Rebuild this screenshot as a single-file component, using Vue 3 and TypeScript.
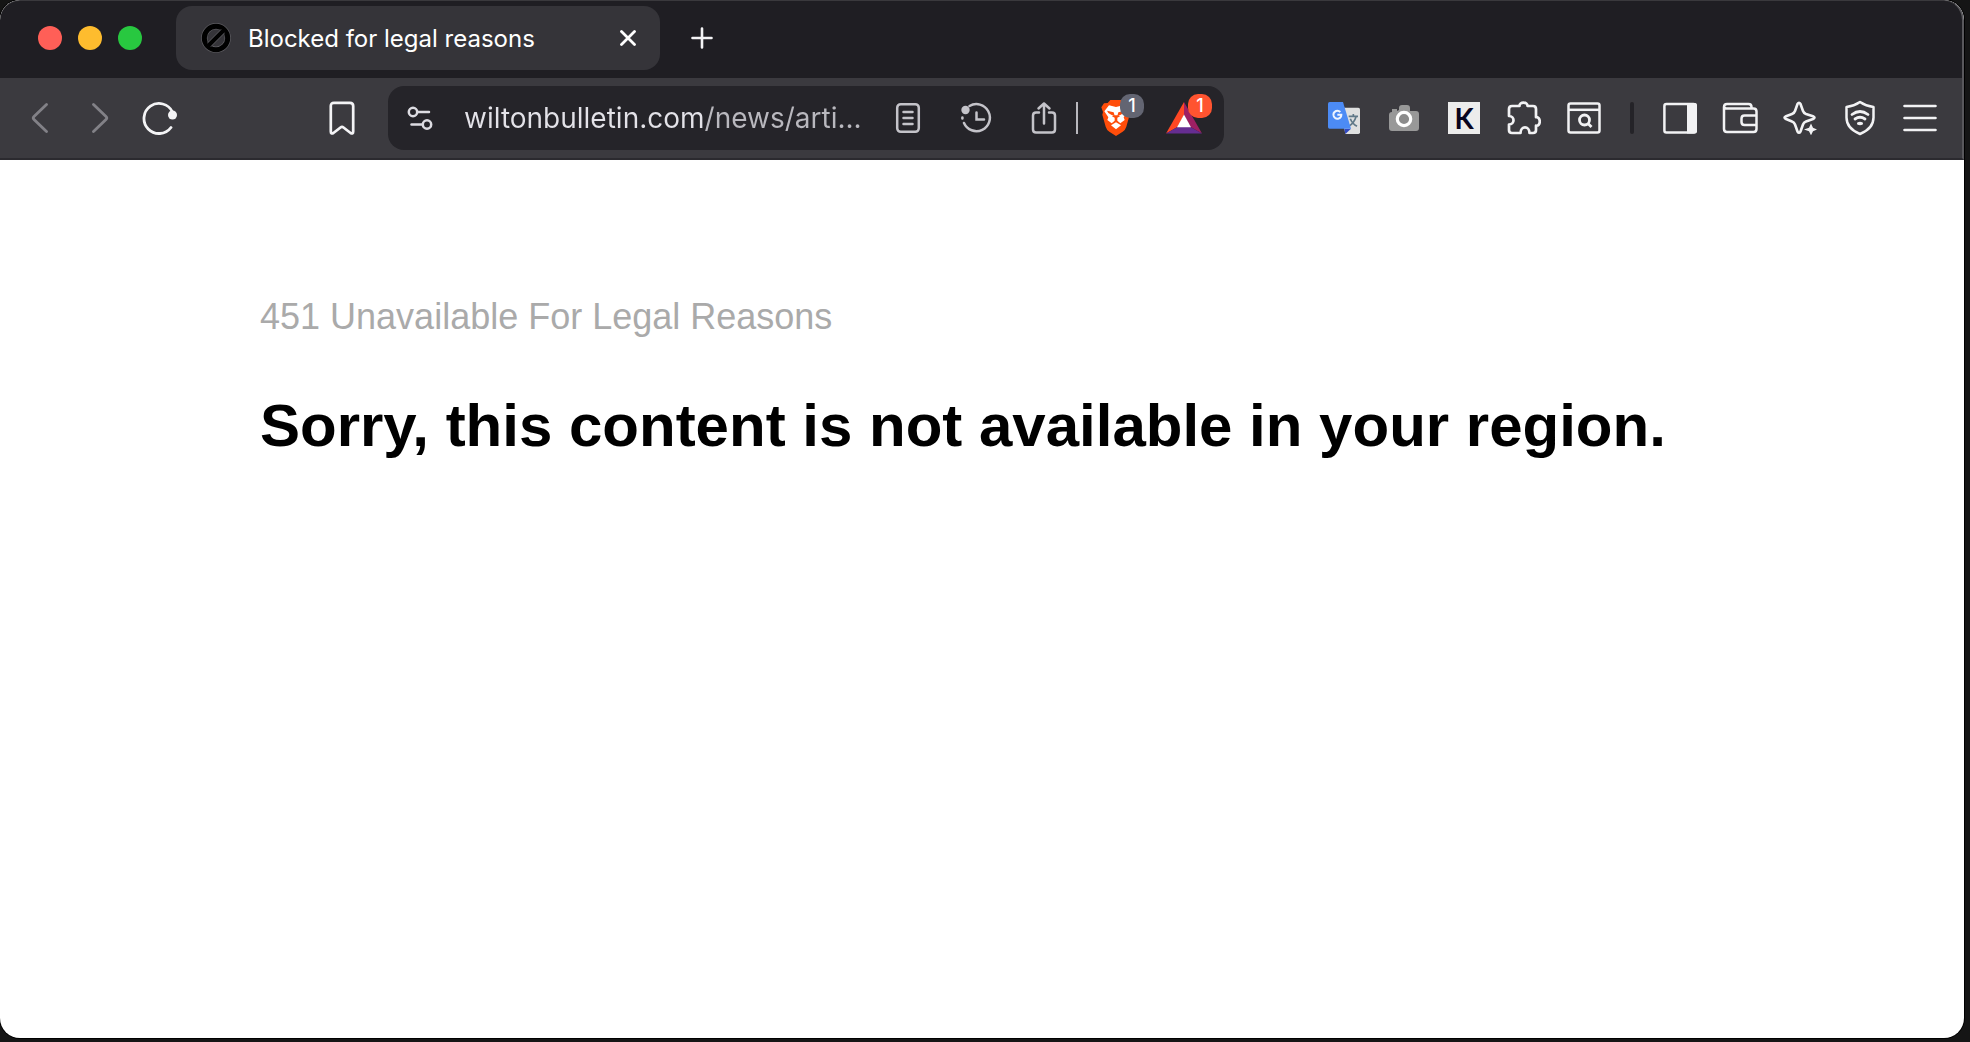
<script setup lang="ts">
import { ref } from 'vue'

const address = ref('wiltonbulletin.com/news/arti...')
const tabTitle = 'Blocked for legal reasons'
const shieldCount = 1
const rewardCount = 1
</script>

<template>
  <div class="desktop">
    <div class="window">
      <header class="tab-strip">
        <div class="lights">
          <button class="light close" aria-label="Close window"></button>
          <button class="light minimise" aria-label="Minimise window"></button>
          <button class="light expand" aria-label="Zoom window"></button>
        </div>
        <div class="tab">
          <svg class="favicon" width="32" height="30" viewBox="0 0 32 30" aria-hidden="true">
            <circle cx="16" cy="15" r="11.7" fill="none" stroke="#5c5b60" stroke-width="6.4" />
            <circle cx="16" cy="15" r="11.7" fill="none" stroke="#000" stroke-width="5" />
            <path d="M9 22 23 8" stroke="#5c5b60" stroke-width="5.4" />
            <path d="M8 23 24 7" stroke="#000" stroke-width="4" />
          </svg>
          <span class="tab-title">{{ tabTitle }}</span>
          <button class="tab-close" aria-label="Close tab">
            <svg width="16" height="16" viewBox="0 0 16 16"><path d="M1.500 1.500l13 13M14.500 1.500l-13 13" fill="none" stroke="#fff" stroke-width="2.800" stroke-linecap="round" /></svg>
          </button>
        </div>
        <button class="new-tab" aria-label="New tab">
          <svg width="22" height="22" viewBox="0 0 22 22"><path d="M11 1.500v19M1.500 11h19" fill="none" stroke="#f4f4f6" stroke-width="2.600" stroke-linecap="round" /></svg>
        </button>
      </header>

      <nav class="toolbar" aria-label="Browser toolbar">
        <div class="history">
          <button class="nav-button" aria-label="Back">
            <svg width="18" height="32" viewBox="0 0 18 32"><path d="M15.500 2.500 3 14.500q-1.500 1.500 0 3l12.500 12" fill="none" stroke="#828187" stroke-width="2.800" stroke-linecap="round" /></svg>
          </button>
          <button class="nav-button" aria-label="Forward">
            <svg width="18" height="32" viewBox="0 0 18 32"><path d="M2.500 2.500 15 14.500q1.500 1.500 0 3l-12.500 12" fill="none" stroke="#828187" stroke-width="2.800" stroke-linecap="round" /></svg>
          </button>
          <button class="nav-button" aria-label="Reload">
            <svg width="36" height="34" viewBox="0 0 36 34">
              <path d="M29 26.500A15 15 0 1 1 30.500 11" fill="none" stroke="#f4f4f6" stroke-width="2.800" stroke-linecap="round" />
              <circle cx="30.500" cy="14" r="4.500" fill="#f4f4f6" />
            </svg>
          </button>
        </div>
        <button class="nav-button" aria-label="Bookmark this tab">
          <svg width="26" height="34" viewBox="0 0 26 34"><path d="M5 1.800h16q3.200 0 3.200 3.200v25.500q0 3-2.600 1.500L14.500 26.500q-1.500-1.200-3 0L4.400 32q-2.600 1.500-2.600-1.500V5Q1.800 1.800 5 1.800z" fill="none" stroke="#f4f4f6" stroke-width="2.700" stroke-linejoin="round" /></svg>
        </button>

        <div class="address-bar">
          <button class="site-info" aria-label="Site settings">
            <svg width="26" height="24" viewBox="0 0 26 24" fill="none" stroke="#dddce2" stroke-width="2.500" stroke-linecap="round">
              <circle cx="6" cy="6" r="4.200" /><path d="M11 6h11" />
              <circle cx="20" cy="18.500" r="4.200" /><path d="M4.500 18.500H15" />
            </svg>
          </button>
          <input v-model="address" class="address" type="text" aria-label="Address" spellcheck="false" />
          <button class="page-action" aria-label="Reader mode">
            <svg width="26" height="32" viewBox="0 0 26 32" fill="none" stroke="#c4c3c9" stroke-width="2.500" stroke-linecap="round">
              <rect x="2.200" y="2.200" width="21.600" height="27.600" rx="3.500" />
              <path d="M8.500 10h9M8.500 16h9M8.500 22h9" />
            </svg>
          </button>
          <button class="page-action" aria-label="History">
            <svg width="34" height="32" viewBox="0 0 34 32" fill="none" stroke="#c4c3c9" stroke-width="2.500" stroke-linecap="round">
              <path d="M10.500 4A13.500 13.500 0 1 1 5 21" />
              <path d="M3.400 15.500v1" />
              <path d="M17.500 10.500v7H25" />
              <circle cx="6.500" cy="8" r="4.200" fill="#c4c3c9" stroke="none" />
            </svg>
          </button>
          <button class="page-action" aria-label="Share">
            <svg width="26" height="34" viewBox="0 0 26 34" fill="none" stroke="#c4c3c9" stroke-width="2.500" stroke-linecap="round" stroke-linejoin="round">
              <path d="M8 11.500H5q-3 0-3 3v14q0 3 3 3h16q3 0 3-3v-14q0-3-3-3h-3" />
              <path d="M13 22.500V2.500M7.500 7.500 13 2.500l5.500 5" />
            </svg>
          </button>
          <span class="bar-divider"></span>
          <button class="badged" aria-label="Shields">
            <svg width="30" height="36" viewBox="0 0 90 108" aria-hidden="true">
              <path d="M28 0h34l8 9 10 1 8 14-4 12 2 8-10 36q-3 10-11 15L45 108 25 95q-8-5-11-15L4 44l2-8L1 22l8-12 11-1z" fill="#ff4d0a" />
              <path d="M24 16 45 21 66 16 80 34 68 52 71 60 58 70 49 62V53L57 49 53 46H37L33 49 41 53V62L32 70 19 60 22 52 10 34z" fill="#fff" />
              <path d="M18 32 38 37 41 47 32 45 22 39zM72 32 52 37 49 47 58 45 68 39z" fill="#ff4d0a" />
              <path d="M30 76 45 67 60 76 45 88z" fill="#fff" />
            </svg>
            <span class="badge grey">{{ shieldCount }}</span>
          </button>
          <button class="badged" aria-label="Rewards">
            <svg width="36" height="32" viewBox="0 0 36 32" aria-hidden="true">
              <path d="M18 0 0 31.500 11.500 25 18 13z" fill="#ff4724" />
              <path d="M18 0 36 31.500 24.500 25 18 13z" fill="#9e1f63" />
              <path d="M0 31.500h36L24.500 25h-13z" fill="#662d91" />
              <path d="M18 12.500 11 25.300h14z" fill="#fff" />
            </svg>
            <span class="badge orange">{{ rewardCount }}</span>
          </button>
        </div>

        <div class="extensions">
          <button class="tool" aria-label="Translate">
            <svg width="32" height="32" viewBox="0 0 96 96" aria-hidden="true">
              <path d="M36 17h55q5 0 5 5v69q0 5-5 5H52z" fill="#dfe0e0" />
              <path d="M62 43h28M76 36v7M84 44q-5 18-22 29M67 50q5 14 20 23" fill="none" stroke="#607988" stroke-width="5" />
              <path d="M49 80h20L52 96z" fill="#3048c0" />
              <path d="M5 0h40l24 80H5q-5 0-5-5V5q0-5 5-5z" fill="#4c8bf5" />
              <path d="M37 30q-6-6-13-3-10 5-7 15 4 10 14 8 9-3 9-12H28" fill="none" stroke="#eef4ff" stroke-width="6" />
            </svg>
          </button>
          <button class="tool" aria-label="Camera">
            <svg width="32" height="28" viewBox="0 0 32 28" aria-hidden="true">
              <path d="M1 11q0-3 3-3V5h5v2l2-1V4q0-3 3-3h5q3 0 3 3v3h6q3 0 3 3v14q0 3-3 3H4q-3 0-3-3z" fill="#989898" />
              <circle cx="16" cy="15" r="6.700" fill="#8c8c8c" stroke="#fff" stroke-width="3.200" />
            </svg>
          </button>
          <button class="tool" aria-label="K extension"><span class="k-tile">K</span></button>
          <button class="tool" aria-label="Extensions">
            <svg width="34" height="34" viewBox="0 0 34 34"><path d="M5 5h7.500C12 .5 21 .5 20.500 5H26q3 0 3 3v8.200c5-.7 5 9.200 0 8.500V29q0 3-3 3h-3.500c0-7.500-9-7.500-9 0H5q-3 0-3-3v-5.500c6 0 6-8.500 0-8.500V8q0-3 3-3z" fill="none" stroke="#f2f2f4" stroke-width="2.700" stroke-linejoin="round" /></svg>
          </button>
          <button class="tool" aria-label="Search tabs">
            <svg width="34" height="32" viewBox="0 0 34 32" fill="none" stroke="#f2f2f4" stroke-width="2.500">
              <rect x="1.500" y="1.500" width="31" height="29" rx="2" /><path d="M2 7.800h30" />
              <circle cx="17.500" cy="18" r="5" stroke-width="2.800" /><path d="M21 21.500 24.500 25" stroke-width="2.800" />
            </svg>
          </button>
          <span class="tool-divider"></span>
          <button class="tool" aria-label="Sidebar">
            <svg width="34" height="32" viewBox="0 0 34 32"><rect x="1.400" y="2" width="31" height="28.500" rx="2" fill="none" stroke="#f2f2f4" stroke-width="2.500" /><path d="M24 1h8q2 0 2 2v26.500q0 2-2 2h-8z" fill="#f2f2f4" /></svg>
          </button>
          <button class="tool" aria-label="Wallet">
            <svg width="36" height="32" viewBox="0 0 36 32" fill="none" stroke="#f2f2f4" stroke-width="2.500" stroke-linejoin="round">
              <path d="M29.500 6.500V5q0-3-3-3H5Q2 2 2 5v22q0 3 3 3h26.500q3 0 3-3V9.500q0-3-3-3H4.500Q2 6.500 2 4.500" />
              <path d="M34 13.500H22.500q-3 0-3 3v3.500q0 3 3 3H34" />
            </svg>
          </button>
          <button class="tool" aria-label="Assistant">
            <svg width="34" height="34" viewBox="0 0 34 34">
              <path d="M14.500 3q1.500-2.500 3 0L20 10q.8 2.200 3 3l7 2.200q3 1.300 0 2.800L23 20.500q-2.200.8-3 3l-2.500 7q-1.500 2.500-3 0L12 23.500q-.8-2.200-3-3L3 18q-3-1.500 0-2.800L9 13q2.200-.8 3-3z" fill="none" stroke="#f2f2f4" stroke-width="2.600" stroke-linejoin="round" />
              <path d="M28 22.500l2 4.200 4 1.800-4 1.800-2 4-2-4-5-1.800 5-1.800z" fill="#f2f2f4" />
            </svg>
          </button>
          <button class="tool" aria-label="VPN">
            <svg width="32" height="36" viewBox="0 0 32 36" fill="none" stroke="#f2f2f4" stroke-width="2.500" stroke-linecap="round" stroke-linejoin="round">
              <path d="M16 2q6 4 13.500 5v10.500q0 11-13.500 16.500Q2.500 28.500 2.500 17.500V7Q10 6 16 2z" />
              <path d="M8 14.500q8-6 16 0M11 19q5-3.500 10 0" stroke-width="2.800" />
              <ellipse cx="16" cy="23.500" rx="3" ry="1.700" fill="#f2f2f4" stroke="none" />
            </svg>
          </button>
          <button class="tool" aria-label="Menu">
            <svg width="34" height="32" viewBox="0 0 34 32"><path d="M1.500 4h31M1.500 16h31M1.500 28h31" stroke="#f2f2f4" stroke-width="2.600" stroke-linecap="round" /></svg>
          </button>
        </div>
      </nav>

      <main class="page">
        <p class="status">451 Unavailable For Legal Reasons</p>
        <h1>Sorry, this content is not available in your region.</h1>
      </main>
    </div>
  </div>
</template>

<style>
body {
  margin: 0;
  background: #151515;
}
</style>

<style scoped>
* {
  box-sizing: border-box;
}

.desktop {
  min-height: 100vh;
  padding: 0 6px 4px 0;
  background: #151515;
  font-family: Inter, "Liberation Sans", sans-serif;
}

.window {
  display: flex;
  flex-direction: column;
  min-height: calc(100vh - 4px);
  overflow: hidden;
  border-radius: 20px;
  background: #fff;
  box-shadow: 0 0 0 1px #000;
}

button {
  display: flex;
  flex: none;
  align-items: center;
  justify-content: center;
  margin: 0;
  padding: 0;
  border: 0;
  background: none;
  font-family: inherit;
}

svg {
  display: block;
  flex: none;
}

.tab-strip {
  display: flex;
  align-items: center;
  height: 78px;
  padding: 0 38px 3px;
  border-top: 1px solid #3a393d;
  border-right: 2px solid #59585c;
  border-radius: 20px 20px 0 0;
  background: #1f1e23;
}

.lights {
  display: flex;
  gap: 16px;
  width: 138px;
}

.light {
  width: 24px;
  height: 24px;
  border-radius: 50%;
}

.close {
  background: #ff5f57;
}

.minimise {
  background: #febc2e;
}

.expand {
  background: #28c840;
}

.tab {
  display: flex;
  align-items: center;
  width: 484px;
  height: 64px;
  padding: 0 24px;
  border-radius: 16px;
  background: #353439;
}

.tab-title {
  flex: 1;
  margin-left: 16px;
  color: #fff;
  font-size: 24px;
  white-space: nowrap;
}

.new-tab {
  width: 64px;
  height: 64px;
  margin-left: 10px;
}

.toolbar {
  display: flex;
  align-items: center;
  height: 82px;
  padding: 0 12px 0 10px;
  border-right: 2px solid #59585c;
  border-bottom: 2px solid #2b2a2f;
  background: #3b3a3f;
}

.history {
  display: flex;
  width: 302px;
}

.nav-button {
  width: 60px;
  height: 60px;
}

.address-bar {
  display: flex;
  flex: 0 1 836px;
  align-items: center;
  min-width: 0;
  height: 64px;
  margin-left: 16px;
  padding: 0 6px 0 18px;
  border-radius: 16px;
  background: #252429;
}

.site-info {
  width: 28px;
}

.address {
  flex: 1;
  min-width: 0;
  height: 48px;
  margin-left: 30px;
  padding: 0;
  border: 0;
  outline: 0;
  background: linear-gradient(90deg, #e3e2e8 240px, #b9b8be 240px);
  background-clip: text;
  -webkit-text-fill-color: transparent;
  font-family: inherit;
  font-size: 28px;
}

.page-action {
  width: 68px;
  height: 48px;
}

.bar-divider {
  flex: none;
  width: 2px;
  height: 32px;
  margin: 0 4px 0 -2px;
  background: #b9b8be;
}

.badged {
  position: relative;
  width: 68px;
  height: 48px;
}

.badge {
  position: absolute;
  top: 0;
  right: 6px;
  width: 24px;
  height: 24px;
  border-radius: 10px;
  color: #fff;
  font-size: 18px;
  font-weight: 500;
  line-height: 24px;
  text-align: center;
}

.grey {
  background: #636572;
}

.orange {
  background: #ff5430;
}

.extensions {
  display: flex;
  align-items: center;
  margin-left: auto;
}

.tool {
  width: 60px;
  height: 60px;
}

.k-tile {
  width: 32px;
  height: 32px;
  background: #ececec;
  color: #08051f;
  font-family: Lato, sans-serif;
  font-size: 28px;
  font-weight: 700;
  line-height: 32px;
}

.tool-divider {
  width: 4px;
  height: 32px;
  margin: 0 16px;
  border-radius: 2px;
  background: #242328;
}

.page {
  flex: 1;
  padding: 136px 260px 80px;
  font-family: "Liberation Sans", Arial, sans-serif;
}

.status {
  margin: 0;
  color: #aaa;
  font-size: 36px;
  line-height: 42px;
}

h1 {
  margin: 54px 0 0;
  color: #000;
  font-size: 60px;
  font-weight: 700;
  line-height: 68px;
}
</style>
